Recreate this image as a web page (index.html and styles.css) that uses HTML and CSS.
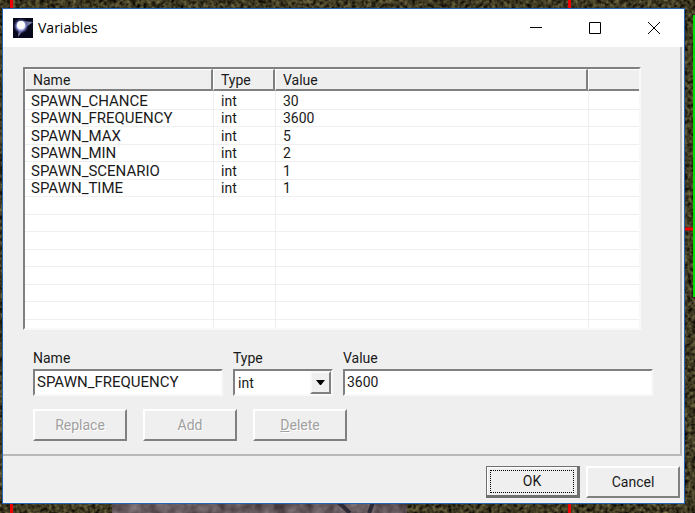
FILE: index.html
```html
<!DOCTYPE html>
<html lang="en">
<head>
<meta charset="utf-8">
<title>Variables</title>
<link rel="stylesheet" href="styles.css">
</head>
<body>
<svg class="terrain" aria-hidden="true">
  <filter id="grass" x="0" y="0" width="100%" height="100%" color-interpolation-filters="sRGB">
    <feTurbulence type="fractalNoise" baseFrequency="0.25" numOctaves="3" seed="4"/>
    <feColorMatrix values="0.66 0 0 0 -0.09  0.62 0 0 0 -0.09  0.42 0 0 0 -0.08  0 0 0 0 1"/>
  </filter>
  <filter id="rock" x="0" y="0" width="100%" height="100%" color-interpolation-filters="sRGB">
    <feTurbulence type="fractalNoise" baseFrequency="0.08" numOctaves="3" seed="8"/>
    <feColorMatrix values="0.4 0 0 0 0.2  0.4 0 0 0 0.15  0.4 0 0 0 0.17  0 0 0 0 1"/>
  </filter>
  <rect width="100%" height="100%" filter="url(#grass)"/>
  <rect x="112" y="500" width="295" height="100%" filter="url(#rock)"/>
  <path d="M336 500L350 513M374 500L369 513" stroke="#2d2a35" stroke-width="4"/>
  <path d="M11.5 0V513M569.5 0V513M600 229H695" stroke="#f00000" stroke-width="3"/>
  <path d="M694 15V297" stroke="#00e000" stroke-width="2"/>
</svg>
<main class="window">
  <header class="titlebar">
    <svg class="app-icon" viewBox="0 0 20 20" aria-hidden="true">
      <defs><radialGradient id="glow"><stop offset="0.3" stop-color="#fff"/><stop offset="0.55" stop-color="#9aa0e6"/><stop offset="1" stop-color="#14164c" stop-opacity="0"/></radialGradient></defs>
      <rect width="20" height="20" fill="#07081c"/>
      <path d="M9 3L20 4L12 10L5 19L6 9Z" fill="#a9b0e8" opacity=".7"/>
      <circle cx="8" cy="8" r="8" fill="url(#glow)"/>
      <circle cx="8" cy="7" r="4" fill="#fff"/>
    </svg>
    <h1>Variables</h1>
    <button class="caption" aria-label="Minimize"><svg viewBox="0 0 12 12"><path d="M0 5.5H12"/></svg></button>
    <button class="caption" aria-label="Maximize"><svg viewBox="0 0 12 12"><path d="M.5 .5H11.5V11.5H.5Z"/></svg></button>
    <button class="caption" aria-label="Close"><svg viewBox="0 0 12 12"><path d="M0 0L12 12M12 0L0 12"/></svg></button>
  </header>
  <section class="panel">
    <div class="list">
      <table>
        <colgroup><col class="c-name"><col class="c-type"><col class="c-value"><col></colgroup>
        <thead><tr><th>Name</th><th>Type</th><th>Value</th><th></th></tr></thead>
        <tbody>
          <tr><td>SPAWN_CHANCE</td><td>int</td><td>30</td><td></td></tr>
          <tr><td>SPAWN_FREQUENCY</td><td>int</td><td>3600</td><td></td></tr>
          <tr><td>SPAWN_MAX</td><td>int</td><td>5</td><td></td></tr>
          <tr><td>SPAWN_MIN</td><td>int</td><td>2</td><td></td></tr>
          <tr><td>SPAWN_SCENARIO</td><td>int</td><td>1</td><td></td></tr>
          <tr><td>SPAWN_TIME</td><td>int</td><td>1</td><td></td></tr>
          <tr><td></td><td></td><td></td><td></td></tr>
          <tr><td></td><td></td><td></td><td></td></tr>
          <tr><td></td><td></td><td></td><td></td></tr>
          <tr><td></td><td></td><td></td><td></td></tr>
          <tr><td></td><td></td><td></td><td></td></tr>
          <tr><td></td><td></td><td></td><td></td></tr>
          <tr><td></td><td></td><td></td><td></td></tr>
          <tr><td></td><td></td><td></td><td></td></tr>
        </tbody>
      </table>
    </div>
    <form class="editor">
      <div class="fields">
        <div class="field f-name"><label for="name">Name</label><input id="name" value="SPAWN_FREQUENCY"></div>
        <div class="field f-type"><label for="type">Type</label>
          <div class="combo"><select id="type"><option>int</option></select>
          <span class="arrow"><svg viewBox="0 0 9 5" aria-hidden="true"><path d="M0 0H9L5 5H4Z"/></svg></span></div>
        </div>
        <div class="field f-value"><label for="value">Value</label><input id="value" value="3600"></div>
      </div>
      <div class="actions">
        <button class="btn" type="button" disabled>Replace</button>
        <button class="btn" type="button" disabled>Add</button>
        <button class="btn" type="button" disabled><span><u>D</u>elete</span></button>
      </div>
    </form>
  </section>
  <footer class="footer">
    <button class="btn default" type="button"><span class="focus">OK</span></button>
    <button class="btn" type="button">Cancel</button>
  </footer>
</main>
</body>
</html>
```
FILE: styles.css
```css
* { box-sizing: border-box; }

body {
  margin: 0;
  padding: 8px 10px 9px 2px;
  min-height: 100vh;
  display: flex;
  background: #38341f;
  color: #1a1a1a;
  font: 14px/18px Roboto, "Liberation Sans", sans-serif;
}

.terrain {
  position: absolute;
  inset: 0;
  width: 100%;
  height: 100%;
}

.window {
  position: relative;
  flex: 1;
  display: flex;
  flex-direction: column;
  border: 1px solid #2464b4;
  background: #efefef;
}

.titlebar {
  height: 38px;
  display: flex;
  align-items: center;
  padding-left: 10px;
  background: #fff;
}

.app-icon { width: 20px; height: 20px; margin-right: 5px; }

h1 {
  flex: 1;
  margin: 0;
  color: #000;
  font: 14px/20px "Open Sans", "Noto Sans", sans-serif;
}

.caption {
  width: 59px;
  height: 38px;
  padding: 0 2px 0 0;
  border: 0;
  background: none;
}

.caption svg {
  display: block;
  width: 12px;
  height: 12px;
  margin: 0 auto;
  fill: none;
  stroke: #000;
}

.panel {
  flex: 1;
  margin-right: 2px;
  padding: 20px 27px 0 20px;
  border: solid #b9b9b9;
  border-width: 0 2px 2px 0;
}

.list {
  height: 263px;
  margin-right: 12px;
  overflow: hidden;
  border: 2px solid;
  border-color: #808080 #f9f9f9 #f9f9f9 #808080;
  background: #fff;
}

table {
  width: 100%;
  table-layout: fixed;
  border-collapse: separate;
  border-spacing: 0;
}

.c-name { width: 188px; }
.c-type { width: 62px; }
.c-value { width: 313px; }

th {
  height: 22px;
  padding: 1px 7px 0;
  text-align: left;
  font-weight: 400;
  line-height: 16px;
  background: #efefef;
  border: solid;
  border-width: 1px 2px 2px 1px;
  border-color: #fff #808080 #808080 #fff;
}

th:last-child { border-right: 0; }

td {
  height: 18px;
  padding: 2px 6px 0;
  line-height: 15px;
  border: solid #efefef;
  border-width: 0 0 1px;
}

td:first-child, #name { font-size: 15px; }
td + td { padding-left: 7px; border-left-width: 1px; }
tbody tr:nth-child(even) td { height: 17px; padding-top: 1px; }
tbody tr:first-child td { height: 19px; padding-top: 3px; }

.fields {
  display: flex;
  gap: 10px;
  padding: 19px 0 0 10px;
}

.field { display: flex; flex-direction: column; gap: 2px; }
.f-name { width: 190px; }
.f-type { width: 100px; }
.f-value { flex: 1; }

input, .combo {
  width: 100%;
  height: 27px;
  border: 2px solid;
  border-color: #808080 #f9f9f9 #f9f9f9 #808080;
  background: #fff;
}

input, select, button { color: inherit; font: inherit; border-radius: 0; outline: 0; }
input { padding: 0 2px 2px; }

.combo { display: flex; position: relative; }

select {
  width: 100%;
  padding: 0 3px;
  border: 0;
  background: none;
  appearance: none;
}

.arrow {
  position: absolute;
  top: 0;
  right: 0;
  bottom: 0;
  width: 21px;
  display: grid;
  place-items: center;
  background: #efefef;
  border: 2px solid;
  border-color: #f9f9f9 #808080 #808080 #f9f9f9;
  pointer-events: none;
}

.arrow svg { width: 9px; height: 5px; }

.actions { display: flex; gap: 16px; padding: 13px 0 13px 10px; }

.btn {
  width: 94px;
  height: 32px;
  padding: 0 0 1px;
  border: 2px solid;
  border-color: #fff #808080 #808080 #fff;
  background: #efefef;
}

.btn:disabled { color: #a0a0a0; text-shadow: 1px 1px #fff; }

.footer {
  display: flex;
  justify-content: flex-end;
  gap: 6px;
  padding: 10px 4px 5px;
}

.default {
  padding: 2px 2px 1px;
  border-color: #707070;
  border-width: 1px 3px 3px 1px;
  box-shadow: inset 1px 1px #fff;
}

.focus { display: block; height: 23px; line-height: 20px; margin: 0 1px; border: 1px dotted #000; }
```
